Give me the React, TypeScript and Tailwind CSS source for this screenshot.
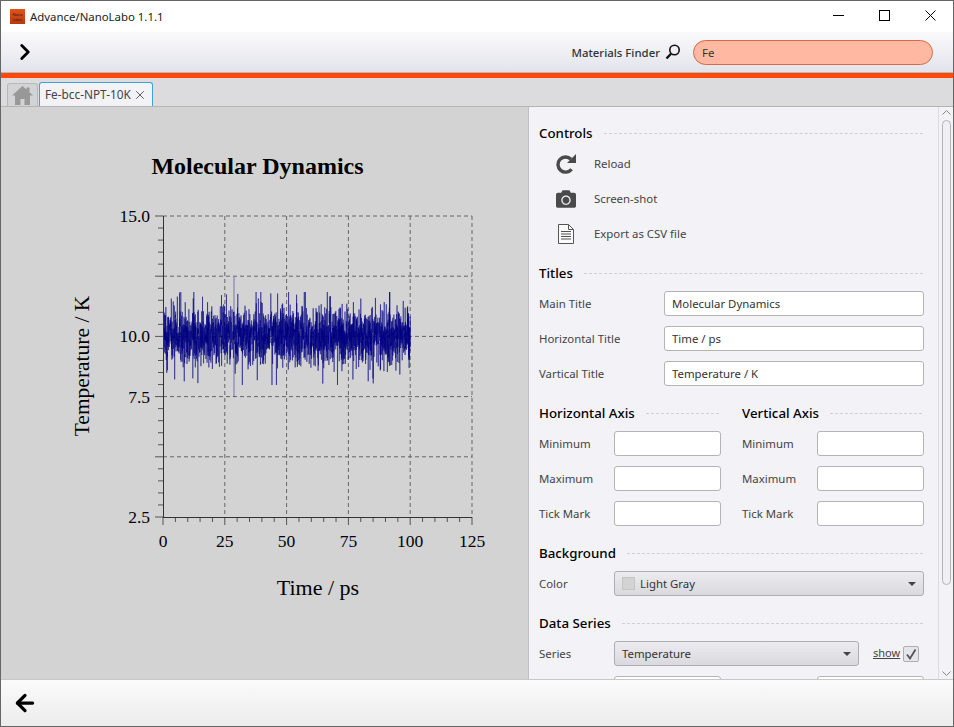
import { FaCamera } from "react-icons/fa"
import { ArrowLeft, ChevronRight, X } from "lucide-react"

const ui = "font-['Noto_Sans','Open_Sans',sans-serif]"

// fixed seed so the trace is the same on every load
function makeTrace() {
  let seed = 48271
  const rnd = () => {
    seed = (seed * 16807) % 2147483647
    return seed / 2147483647
  }
  const pts: string[] = []
  const n = 2500
  for (let i = 0; i <= n; i++) {
    const x = 163.5 + (i / n) * 247
    const spread = rnd() < 0.2 ? 31 : 18
    const g = (rnd() + rnd() + rnd() + rnd() + rnd() + rnd() - 3) * spread
    const y = 336 + Math.max(-44, Math.min(49, g))
    pts.push(`${x.toFixed(2)},${y.toFixed(1)}`)
  }
  return pts.join(" ")
}

const trace = makeTrace()

const majorX = [163, 224.8, 286.6, 348.4, 410.2, 472]
const majorY = [216, 276.2, 336.4, 396.6, 456.8, 517]
const xLabels = ["0", "25", "50", "75", "100", "125"]
const yLabels: [string, number][] = [
  ["15.0", 216],
  ["10.0", 336.4],
  ["7.5", 396.6],
  ["2.5", 517],
]

function Chart() {
  const minorX: number[] = []
  const minorY: number[] = []
  for (let i = 0; i < 5; i++) {
    for (let j = 1; j < 5; j++) {
      minorX.push(majorX[i] + (j * (majorX[i + 1] - majorX[i])) / 5)
      minorY.push(majorY[i] + (j * (majorY[i + 1] - majorY[i])) / 5)
    }
  }
  return (
    <svg width="527" height="573" viewBox="1 107 527 573" className="block font-['Liberation_Serif',serif]">
      <text x="257.5" y="174" textAnchor="middle" fontSize="24" fontWeight="700" fill="#000">
        Molecular Dynamics
      </text>
      {majorX.slice(1).map((x) => (
        <line key={x} x1={x} x2={x} y1="216" y2="517" stroke="#666" strokeDasharray="4 3" />
      ))}
      {majorY.slice(0, 5).map((y) => (
        <line key={y} x1="163" x2="472" y1={y} y2={y} stroke="#666" strokeDasharray="4 3" />
      ))}
      {majorY.map((y) => (
        <line key={y} x1="155" x2="163" y1={y} y2={y} stroke="#555" />
      ))}
      {minorY.map((y) => (
        <line key={y} x1="158" x2="163" y1={y} y2={y} stroke="#555" />
      ))}
      {majorX.map((x) => (
        <line key={x} x1={x} x2={x} y1="517" y2="525" stroke="#555" />
      ))}
      {minorX.map((x) => (
        <line key={x} x1={x} x2={x} y1="517" y2="522" stroke="#555" />
      ))}
      <polyline points={trace} fill="none" stroke="#000080" strokeWidth="0.5" />
      <line x1="234" x2="234" y1="277" y2="397" stroke="#000080" strokeOpacity="0.45" />
      <line x1="163.5" x2="163.5" y1="336" y2="392" stroke="#000080" strokeOpacity="0.4" />
      <line x1="163.5" x2="163.5" y1="216" y2="517" stroke="#333" />
      <line x1="163" x2="472" y1="517.5" y2="517.5" stroke="#333" />
      {yLabels.map(([t, y]) => (
        <text key={t} x="150" y={y + 6} textAnchor="end" fontSize="17.5" fill="#000">
          {t}
        </text>
      ))}
      {xLabels.map((t, i) => (
        <text key={t} x={majorX[i]} y="547" textAnchor="middle" fontSize="17.5" fill="#000">
          {t}
        </text>
      ))}
      <text x="318" y="595" textAnchor="middle" fontSize="22" fill="#000">
        Time / ps
      </text>
      <text transform="translate(89 366) rotate(-90)" textAnchor="middle" fontSize="21.5" fill="#000">
        Temperature / K
      </text>
    </svg>
  )
}

function Heading({ title, className }: { title: string; className?: string }) {
  return (
    <div className={`flex h-[25px] items-center gap-[11px] ${className ?? ""}`}>
      <span className="text-[13.3px] leading-none font-medium text-black">{title}</span>
      <div className="mr-[2px] flex-1 border-t border-dashed border-[#d0d0d0]" />
    </div>
  )
}

function Field({ value = "", className }: { value?: string; className?: string }) {
  return (
    <input
      readOnly
      value={value}
      className={`h-[25px] rounded-[3px] border border-[#b4b4b4] bg-white px-[7px] text-[11.4px] text-[#333] outline-none ${className ?? ""}`}
    />
  )
}

function Row({ label, labelClass, children }: { label: string; labelClass: string; children: React.ReactNode }) {
  return (
    <div className="flex h-[35px] items-center">
      <span className={`shrink-0 text-[11.4px] text-[#444] ${labelClass}`}>{label}</span>
      {children}
    </div>
  )
}

function Combo({ className, children }: { className?: string; children: React.ReactNode }) {
  return (
    <div
      className={`flex h-[25px] items-center rounded-[3px] border border-[#aeaeae] bg-linear-to-b from-[#ececf0] to-[#d9d9de] pr-[7px] pl-[7px] text-[11.4px] text-[#333] ${className ?? ""}`}
    >
      <div className="flex flex-1 items-center">{children}</div>
      <div className="h-0 w-0 border-x-[4px] border-t-[4px] border-x-transparent border-t-[#444]" />
    </div>
  )
}

function ControlRow({ icon, label }: { icon: React.ReactNode; label: string }) {
  return (
    <div className="flex h-[35px] items-center">
      <div className="mr-[2px] flex w-[53px] justify-center">{icon}</div>
      <span className="text-[11.4px] text-[#444]">{label}</span>
    </div>
  )
}

function AxisColumn({ title }: { title: string }) {
  return (
    <div className="w-[182px]">
      <Heading title={title} />
      {["Minimum", "Maximum", "Tick Mark"].map((l) => (
        <Row key={l} label={l} labelClass="w-[75px]">
          <Field className="w-[107px]" />
        </Row>
      ))}
    </div>
  )
}

function ReloadIcon() {
  return (
    <svg width="20" height="20" viewBox="0 0 20 20" fill="none">
      <path d="M15.6 15.2A7.6 7.6 0 1 1 15 5.2" stroke="#4a4a4a" strokeWidth="3.4" />
      <path d="M20 0v9h-9z" fill="#4a4a4a" />
    </svg>
  )
}

function FileIcon() {
  return (
    <svg width="16" height="20" viewBox="0 0 16 20" fill="none" stroke="#555">
      <path d="M.5.5h10l5 5v14H.5z" fill="#fafafa" />
      <path d="M10.5.5v5h5M3 7.5h10M3 10h10M3 12.5h10M3 15h10" strokeWidth="1" />
    </svg>
  )
}

function FinderIcon() {
  return (
    <svg width="16" height="16" viewBox="0 0 16 16" fill="none" stroke="#111">
      <circle cx="9.5" cy="6" r="4.7" strokeWidth="1.6" />
      <path d="M6 9.7 1.5 14.5" strokeWidth="2.4" />
    </svg>
  )
}

function HomeIcon() {
  return (
    <svg width="21" height="19" viewBox="0 0 21 19" fill="#989898">
      <path d="M10.5 0 0 9.5h3V19h5.5v-6h4v6H18V9.5h3l-3.5-3.2V1.5h-3v2z" />
    </svg>
  )
}

export default function App() {
  return (
    <div className={`flex h-[727px] w-[954px] flex-col overflow-hidden border border-[#666] bg-white ${ui}`}>
      {/* title bar */}
      <div className="flex h-[31px] shrink-0 items-center bg-white">
        <div className="ml-[9px] flex h-[15px] w-[15px] flex-col items-center justify-center bg-linear-to-b from-[#e0541c] to-[#b83a10] text-[4px] leading-[5px] text-[#3a1005]">
          <span>Nano</span>
          <span>Labo</span>
        </div>
        <span className="ml-[5px] text-[11.4px] text-[#222]">Advance/NanoLabo 1.1.1</span>
        <div className="mb-[2px] ml-auto flex items-center">
          <div className="flex w-[46px] justify-center">
            <div className="h-px w-[11px] bg-black" />
          </div>
          <div className="flex w-[46px] justify-center">
            <div className="h-[11px] w-[11px] border border-black" />
          </div>
          <div className="flex w-[46px] justify-center">
            <svg width="11" height="11" viewBox="0 0 11 11" stroke="#000">
              <path d="M.5.5l10 10M10.5.5l-10 10" />
            </svg>
          </div>
        </div>
      </div>

      {/* toolbar */}
      <div className="flex h-[41px] shrink-0 items-center border-b border-[#b8b8b8] bg-linear-to-b from-[#fafafc] to-[#e3e3ec]">
        <ChevronRight size={26} strokeWidth={2.6} className="ml-[11px] text-black" />
        <span className="ml-auto pt-[1px] text-[11.4px] font-medium text-[#333]">Materials Finder</span>
        <div className="ml-[5px]">
          <FinderIcon />
        </div>
        <input
          readOnly
          value="Fe"
          className="mr-[20px] ml-[12px] h-[25px] w-[240px] rounded-full border border-[#d96a45] bg-[#ffb9a3] px-[8px] text-[11.4px] text-[#333] outline-none"
        />
      </div>
      <div className="h-[5px] shrink-0 bg-[#ff4a0a]" />

      {/* tabs */}
      <div className="flex h-[29px] shrink-0 items-end border-b border-[#b4b4b4] bg-[#dcdcde] pl-[6px]">
        <div className="flex h-[23px] w-[31px] items-center justify-center rounded-t-[3px] border border-b-0 border-[#b8b8b8] bg-[#d3d3d5]">
          <HomeIcon />
        </div>
        <div className="ml-[1px] flex h-[24px] w-[114px] items-center rounded-t-[3px] border border-b-0 border-[#3ea3d8] bg-[#f2f2f7] pl-[5px] text-[11.8px] text-[#444]">
          Fe-bcc-NPT-10K
          <X size={14} strokeWidth={1.6} className="ml-[2px] text-[#555]" />
        </div>
      </div>

      {/* main */}
      <div className="flex min-h-0 flex-1">
        <div className="w-[528px] shrink-0 border-r border-[#c0c0c0] bg-[#d3d3d3]">
          <Chart />
        </div>
        <div className="min-w-0 flex-1 overflow-hidden bg-[#f2f2f7] pt-[14px] pr-[13px] pl-[10px]">
          <Heading title="Controls" />
          <ControlRow icon={<ReloadIcon />} label="Reload" />
          <ControlRow icon={<FaCamera size={20} className="text-[#4a4a4a]" />} label="Screen-shot" />
          <ControlRow icon={<FileIcon />} label="Export as CSV file" />

          <Heading title="Titles" className="mt-[10px]" />
          {[
            ["Main Title", "Molecular Dynamics"],
            ["Horizontal Title", "Time / ps"],
            ["Vartical Title", "Temperature / K"],
          ].map(([l, v]) => (
            <Row key={l} label={l} labelClass="w-[125px]">
              <Field value={v} className="w-[260px]" />
            </Row>
          ))}

          <div className="mt-[10px] flex gap-[21px]">
            <AxisColumn title="Horizontal Axis" />
            <AxisColumn title="Vertical Axis" />
          </div>

          <Heading title="Background" className="mt-[10px]" />
          <Row label="Color" labelClass="w-[75px]">
            <Combo className="w-[310px]">
              <div className="mr-[5px] h-[13px] w-[13px] border border-[#c4c4c4] bg-[#d3d3d3]" />
              Light Gray
            </Combo>
          </Row>

          <Heading title="Data Series" className="mt-[10px]" />
          <Row label="Series" labelClass="w-[75px]">
            <Combo className="w-[245px]">Temperature</Combo>
            <span className="ml-[14px] text-[11px] text-[#444] underline">show</span>
            <div className="ml-[3px] flex h-[16px] w-[16px] items-center justify-center rounded-[2px] border border-[#aeaeae] bg-[#e6e6ea]">
              <svg width="12" height="12" viewBox="0 0 12 12" fill="none" stroke="#555" strokeWidth="1.8">
                <path d="M2 6.5 5 10.5 10.5 1.5" />
              </svg>
            </div>
          </Row>
          <div className="flex h-[35px] items-center">
            <Field className="ml-[75px] w-[107px]" />
            <Field className="ml-[96px] w-[107px]" />
          </div>
        </div>

        {/* scrollbar */}
        <div className="flex w-[15px] shrink-0 flex-col items-center border-l border-[#dcdcdc] bg-[#f2f2f7]">
          <svg width="9" height="5" viewBox="0 0 9 5" fill="none" stroke="#888" className="mt-[3px]">
            <path d="M.5 4.5l4-4 4 4" />
          </svg>
          <div className="mt-[5px] h-[465px] w-[9px] rounded-full border border-[#b4b4b4] bg-[#f0f0f4]" />
          <svg width="9" height="5" viewBox="0 0 9 5" fill="none" stroke="#888" className="mt-auto mb-[3px]">
            <path d="M.5.5l4 4 4-4" />
          </svg>
        </div>
      </div>

      {/* bottom bar */}
      <div className="flex h-[47px] shrink-0 items-center border-t border-[#c8c8c8] bg-linear-to-b from-[#fbfbfb] to-[#ececec]">
        <ArrowLeft size={26} strokeWidth={3} className="ml-[11px] text-black" />
      </div>
    </div>
  )
}
